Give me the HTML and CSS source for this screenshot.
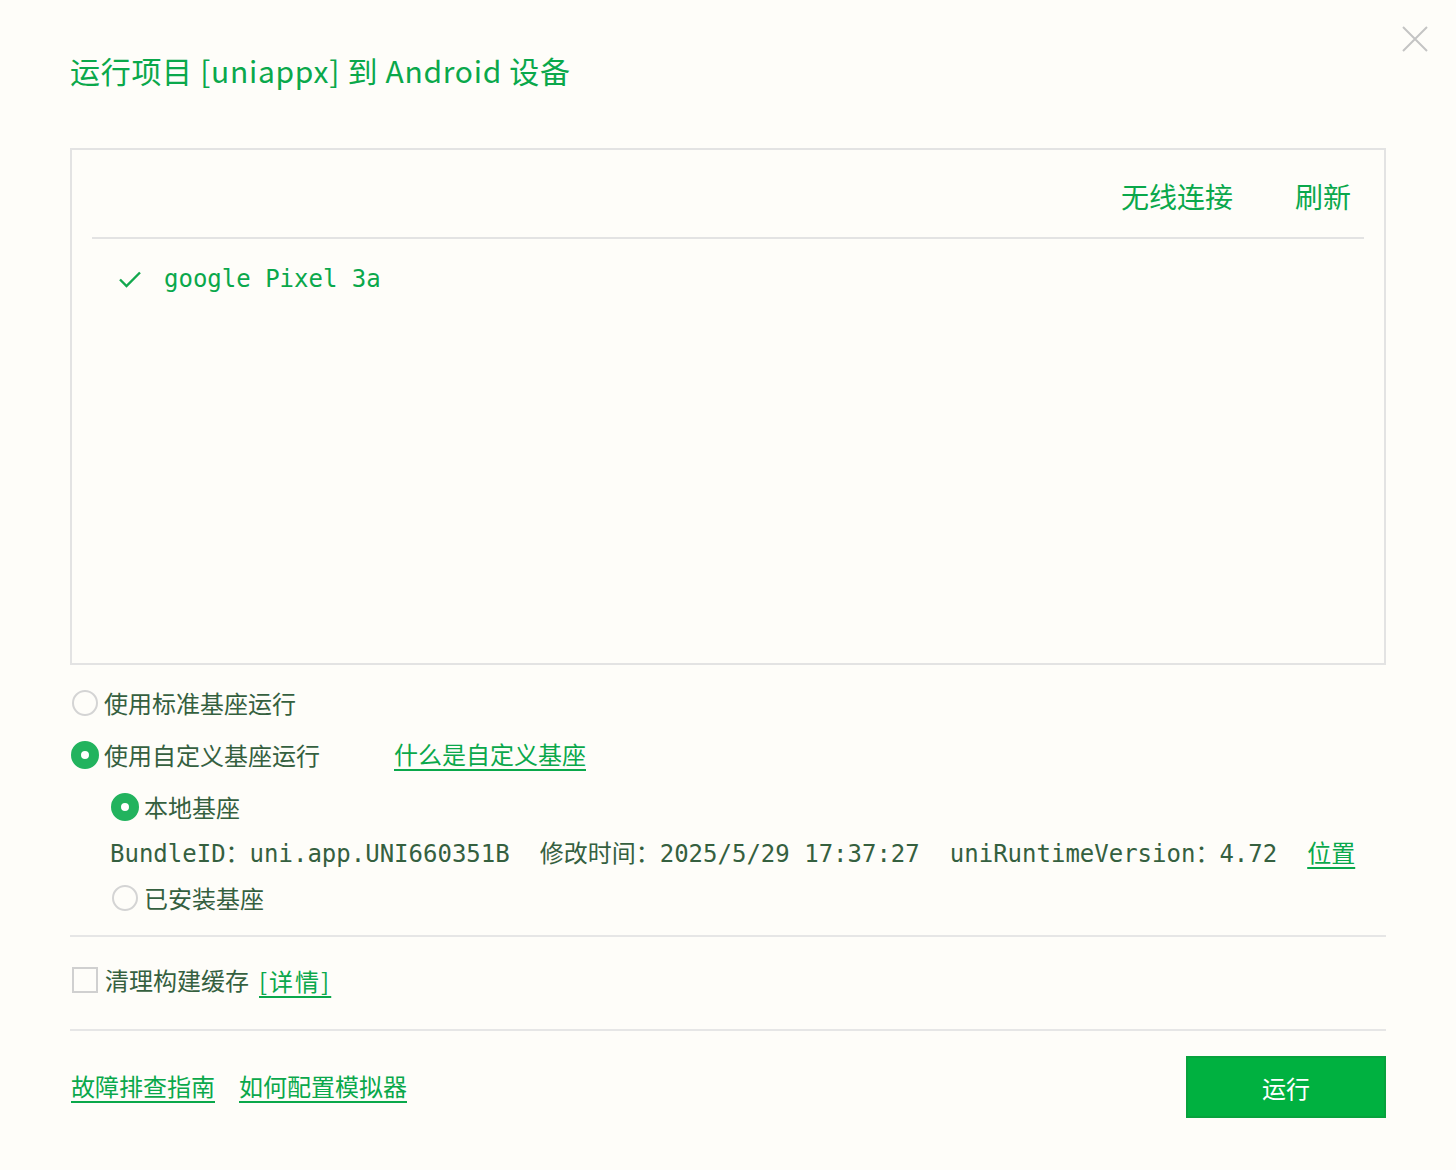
FILE: index.html
```html
<!DOCTYPE html>
<html lang="zh-CN">
  <head>
    <meta charset="UTF-8" />
    <meta name="viewport" content="width=device-width, initial-scale=1.0" />
    <title>运行项目</title>
    <link rel="stylesheet" href="styles.css">
  </head>
  <body>
    <div class="dialog">
      <button class="close-button" aria-label="关闭">
        <svg width="28" height="28" viewBox="0 0 28 28">
          <path d="M2 2 L26 26 M26 2 L2 26" stroke="#c4c4c4" stroke-width="2" fill="none" />
        </svg>
      </button>

      <h1 class="dialog-title">运行项目 [uniappx] 到 Android 设备</h1>

      <div class="device-box">
        <div class="device-header">
          <a class="header-link">无线连接</a>
          <a class="header-link">刷新</a>
        </div>
        <div class="device-list">
          <div class="device-item">
            <svg class="check-icon" width="24" height="24" viewBox="0 0 24 24">
              <path d="M2 12.5 L8.5 19 L22 5.5" stroke="#12a84e" stroke-width="2.4" fill="none" />
            </svg>
            <span class="device-name">google Pixel 3a</span>
          </div>
        </div>
      </div>

      <div class="options">
        <label class="option-row">
          <span class="radio"></span>
          <span class="option-text">使用标准基座运行</span>
        </label>
        <label class="option-row row-custom">
          <span class="radio checked"></span>
          <span class="option-text">使用自定义基座运行</span>
          <a class="text-link what-link">什么是自定义基座</a>
        </label>
        <label class="option-row sub-row">
          <span class="radio checked"></span>
          <span class="option-text">本地基座</span>
        </label>
        <div class="info-row">
          <span class="info-item">BundleID：uni.app.UNI660351B</span>
          <span class="info-item">修改时间：2025/5/29 17:37:27</span>
          <span class="info-item">uniRuntimeVersion：4.72</span>
          <a class="text-link">位置</a>
        </div>
        <label class="option-row sub-row row-installed">
          <span class="radio"></span>
          <span class="option-text">已安装基座</span>
        </label>
      </div>

      <div class="divider"></div>

      <label class="option-row check-row">
        <span class="checkbox"></span>
        <span class="option-text">清理构建缓存</span>
        <a class="text-link detail-link">[详情]</a>
      </label>

      <div class="divider second"></div>

      <div class="footer">
        <div class="footer-links">
          <a class="text-link">故障排查指南</a>
          <a class="text-link">如何配置模拟器</a>
        </div>
        <button class="run-button">运行</button>
      </div>
    </div>
  </body>
</html>
```

FILE: styles.css
```css
* {
  margin: 0;
  padding: 0;
  box-sizing: border-box;
}

body {
  width: 1456px;
  height: 1170px;
  background-color: #fefdf9;
  font-family: "Noto Sans CJK SC", "Noto Sans", sans-serif;
  color: #35603f;
  overflow: hidden;
}

.dialog {
  position: relative;
  padding: 48px 70px 0 70px;
}

.close-button {
  position: absolute;
  top: 25px;
  right: 27px;
  width: 28px;
  height: 28px;
  border: none;
  background: transparent;
  cursor: pointer;
}

.dialog-title {
  font-weight: 400;
  font-size: 30px;
  line-height: 44px;
  letter-spacing: 0.7px;
  color: #0aa84b;
  margin-bottom: 56px;
}

.device-box {
  height: 517px;
  border: 2px solid #e3e3e3;
}

.device-header {
  height: 89px;
  margin: 0 20px;
  border-bottom: 2px solid #e3e3e3;
  display: flex;
  justify-content: flex-end;
  align-items: center;
  gap: 62px;
  padding: 4px 13px 0 0;
}

.header-link {
  font-size: 28px;
  color: #0aa84b;
  cursor: pointer;
}

.device-list {
  padding: 22px 0 0 46px;
}

.device-item {
  display: flex;
  align-items: center;
  gap: 22px;
  height: 36px;
}

.device-name {
  font-family: "DejaVu Sans Mono", monospace;
  font-size: 24px;
  color: #0aa84b;
}

.options {
  margin-top: 18px;
  display: flex;
  flex-direction: column;
}

.option-row {
  display: flex;
  align-items: center;
  height: 40px;
  font-size: 24px;
  gap: 6px;
  padding-left: 2px;
}

.row-custom,
.sub-row {
  margin-top: 12px;
}

.sub-row {
  padding-left: 42px;
}

.radio {
  width: 26px;
  height: 26px;
  border-radius: 50%;
  border: 2px solid #d4d4d4;
  background: #fefdf9;
  flex-shrink: 0;
}

.radio.checked {
  width: 28px;
  height: 28px;
  margin: 0 -1px;
  border: 10px solid #22b35e;
  background: #fff;
}

.option-text {
  line-height: 40px;
}

.text-link {
  color: #0aa84b;
  text-decoration: underline;
  text-underline-offset: 5px;
  text-decoration-thickness: 2px;
  cursor: pointer;
}

.what-link {
  margin-left: 68px;
  position: relative;
  top: -2px;
}

.info-row {
  margin-top: 4px;
  height: 40px;
  display: flex;
  align-items: center;
  gap: 30px;
  padding-left: 40px;
  font-family: "DejaVu Sans Mono", "Noto Sans CJK SC", monospace;
  font-size: 24px;
}

.info-row .text-link {
  font-family: "Noto Sans CJK SC", sans-serif;
}

.row-installed {
  margin-top: 7px;
}

.divider {
  margin-top: 17px;
  height: 2px;
  background: #e6e6e6;
}

.check-row {
  margin-top: 23px;
  gap: 7px;
}

.checkbox {
  width: 26px;
  height: 26px;
  border: 2px solid #d0d0d0;
  background: #fefdf9;
  flex-shrink: 0;
}

.detail-link {
  margin-left: 3px;
  letter-spacing: 2px;
}

.divider.second {
  margin-top: 29px;
}

.footer {
  margin-top: 25px;
  display: flex;
  justify-content: space-between;
  align-items: center;
}

.footer-links {
  display: flex;
  gap: 24px;
  font-size: 24px;
  padding-left: 1px;
  position: relative;
  top: -2px;
}

.run-button {
  width: 200px;
  height: 62px;
  background: #00b140;
  border: 2px solid #07a23d;
  color: #fff;
  font-family: "Noto Sans CJK SC", sans-serif;
  font-size: 24px;
  cursor: pointer;
}
```
